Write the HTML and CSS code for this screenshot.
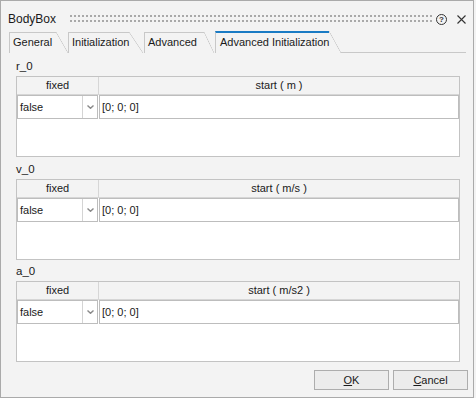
FILE: index.html
```html
<!DOCTYPE html>
<html>
<head>
<meta charset="utf-8">
<link rel="stylesheet" href="styles.css">
</head>
<body>
<div class="win">
  <div class="titlebar">
    <span class="title">BodyBox</span>
    <svg class="grip" width="363" height="8" viewBox="0 0 363 8">
      <defs>
        <pattern id="dots" width="4" height="5" patternUnits="userSpaceOnUse">
          <rect x="0" y="0" width="2" height="2" fill="#a9a9a9"/>
        </pattern>
      </defs>
      <rect x="0" y="0" width="363" height="8" fill="url(#dots)"/>
    </svg>
    <span class="help">?</span>
    <svg class="close" width="9" height="9" viewBox="0 0 9 9">
      <path d="M0.5 0.5 L8.5 8.5 M8.5 0.5 L0.5 8.5" stroke="#333" stroke-width="1.1" fill="none"/>
    </svg>
  </div>
  <div class="tabs">
    <div class="tab t1">General</div>
    <div class="tab t2">Initialization</div>
    <div class="tab t3">Advanced</div>
    <div class="tab t4 active">Advanced Initialization</div>
    <div class="tabline"></div>
  </div>
  <div class="page">
    <section class="sec">
      <div class="lbl">r_0</div>
      <div class="grid">
        <div class="head"><div class="hc c1">fixed</div><div class="hc c2">start ( m )</div></div>
        <div class="row">
          <div class="combo"><span class="val">false</span><span class="arrow"><svg width="7" height="4" viewBox="0 0 7 4"><path d="M0.5 0.5 L3.5 3.3 L6.5 0.5" stroke="#8a8a8a" stroke-width="1.4" fill="none"/></svg></span></div>
          <div class="field">[0; 0; 0]</div>
        </div>
      </div>
    </section>
    <section class="sec">
      <div class="lbl">v_0</div>
      <div class="grid">
        <div class="head"><div class="hc c1">fixed</div><div class="hc c2">start ( m/s )</div></div>
        <div class="row">
          <div class="combo"><span class="val">false</span><span class="arrow"><svg width="7" height="4" viewBox="0 0 7 4"><path d="M0.5 0.5 L3.5 3.3 L6.5 0.5" stroke="#8a8a8a" stroke-width="1.4" fill="none"/></svg></span></div>
          <div class="field">[0; 0; 0]</div>
        </div>
      </div>
    </section>
    <section class="sec">
      <div class="lbl">a_0</div>
      <div class="grid">
        <div class="head"><div class="hc c1">fixed</div><div class="hc c2">start ( m/s2 )</div></div>
        <div class="row">
          <div class="combo"><span class="val">false</span><span class="arrow"><svg width="7" height="4" viewBox="0 0 7 4"><path d="M0.5 0.5 L3.5 3.3 L6.5 0.5" stroke="#8a8a8a" stroke-width="1.4" fill="none"/></svg></span></div>
          <div class="field">[0; 0; 0]</div>
        </div>
      </div>
    </section>
  </div>
  <div class="buttons">
    <button class="btn"><u>O</u>K</button>
    <button class="btn"><u>C</u>ancel</button>
  </div>
</div>
</body>
</html>
```

FILE: styles.css
```css
* { box-sizing: border-box; }
html, body { margin: 0; padding: 0; }
body {
  width: 476px;
  height: 398px;
  background: #f3f3f3;
  font-family: "Liberation Sans", Arial, sans-serif;
  font-size: 11px;
  color: #1a1a1a;
}
.win {
  width: 474px;
  height: 398px;
  border: 1px solid #aaaaaa;
  background: #f3f3f3;
  display: flex;
  flex-direction: column;
}
.titlebar {
  height: 30px;
  padding: 6px 0 0 7px;
  display: flex;
  align-items: center;
}
.title { width: 62px; font-size: 12px; }
.grip { display: block; }
.help {
  margin-left: 3px;
  width: 11px;
  height: 11px;
  border: 1px solid #333;
  border-radius: 50%;
  font-size: 8px;
  font-weight: bold;
  line-height: 9px;
  text-align: center;
  color: #333;
}
.close { margin-left: 10px; display: block; }

.tabs {
  height: 22px;
  display: flex;
  align-items: flex-end;
  padding-left: 8px;
}
.tab {
  position: relative;
  height: 21px;
  border-left: 1px solid #c8c8c8;
  border-top: 1px solid #c8c8c8;
  padding-left: 3px;
  line-height: 19px;
  white-space: nowrap;
}
.tab::after {
  content: "";
  position: absolute;
  top: -1px;
  height: 21px;
  background: linear-gradient(to top right, transparent calc(50% - 0.6px), #c8c8c8 50%, transparent calc(50% + 0.6px));
}
.t1 { width: 47px; margin-right: 12px; }
.t1::after { right: -12px; width: 12px; }
.t2 { width: 61px; margin-right: 15px; }
.t2::after { right: -14px; width: 14px; }
.t3 { width: 60px; margin-right: 11px; }
.t3::after { right: -10px; width: 10px; }
.tab.active {
  width: 114px;
  height: 22px;
  border-top: 2px solid #1a7bc4;
  margin-right: 12px;
  line-height: 19px;
  padding-left: 4px;
}
.tab.active::after { top: -2px; height: 22px; right: -12px; width: 12px; }
.tabline {
  flex: 1;
  height: 1px;
  background: #c8c8c8;
  margin-right: 7px;
}

.page {
  padding: 3px 14px 0 15px;
}
.sec + .sec { margin-top: 2px; }
.sec:last-child { margin-top: 1px; }
.lbl {
  height: 20px;
  line-height: 20px;
  font-size: 11.5px;
}
.grid {
  width: 444px;
  height: 81px;
  border: 1px solid #c3c3c3;
  background: #fff;
}
.head {
  display: flex;
  height: 18px;
  background: #f3f3f3;
  border-bottom: 1px solid #d6d6d6;
  line-height: 17px;
}
.hc { text-align: center; }
.c1 { width: 82px; border-right: 1px solid #d6d6d6; }
.c2 { flex: 1; }
.row {
  display: flex;
  height: 24px;
  line-height: 22px;
}
.combo {
  width: 81px;
  display: flex;
  border: 1px solid #bdbdbd;
}
.val {
  flex: 1;
  padding-left: 2px;
  border-right: 1px solid #d4d4d4;
}
.arrow {
  width: 14px;
  display: flex;
  align-items: center;
  justify-content: center;
}
.arrow svg { display: block; }
.field {
  flex: 1;
  margin-left: 1px;
  border: 1px solid #bdbdbd;
  padding-left: 2px;
}

.buttons {
  margin-top: auto;
  display: flex;
  justify-content: flex-end;
  gap: 4px;
  padding: 0 5px 7px 0;
}
.btn {
  width: 75px;
  height: 20px;
  border: 1px solid #adadad;
  background: #ececec;
  font-family: "Liberation Sans", Arial, sans-serif;
  font-size: 11px;
  color: #1a1a1a;
  padding: 0;
  line-height: 18px;
}
```
